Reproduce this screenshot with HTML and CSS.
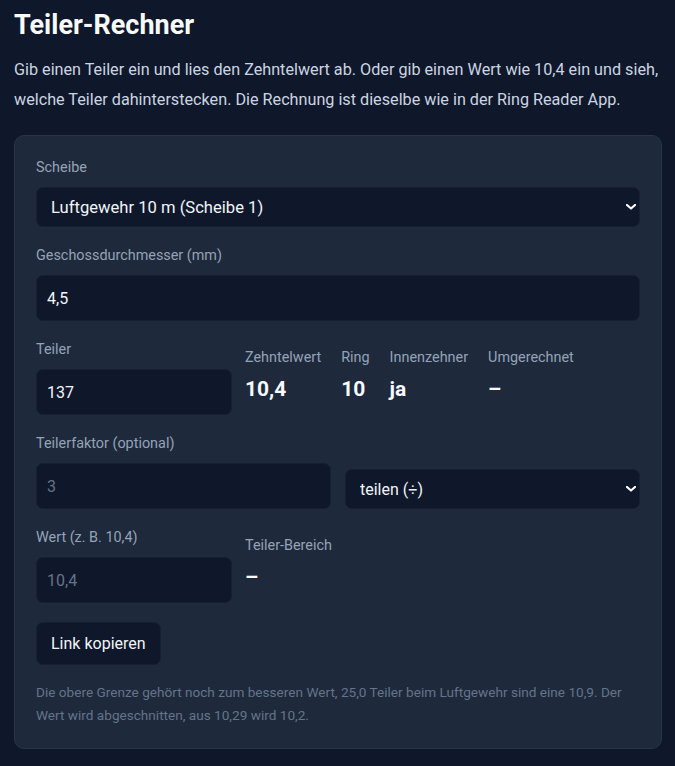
FILE: index.html
```html
<!DOCTYPE html>
<html lang="de">
<head>
<meta charset="utf-8">
<title>Teiler-Rechner</title>
<link rel="stylesheet" href="styles.css">
</head>
<body>
<main class="page">
  <h1 class="title">Teiler-Rechner</h1>
  <p class="intro">Gib einen Teiler ein und lies den Zehntelwert ab. Oder gib einen Wert wie 10,4 ein und sieh, welche Teiler dahinterstecken. Die Rechnung ist dieselbe wie in der Ring Reader App.</p>

  <section class="card">
    <div class="field">
      <label class="label" for="scheibe">Scheibe</label>
      <div class="select-wrap">
        <select id="scheibe" class="select select-wide">
          <option>Luftgewehr 10 m (Scheibe 1)</option>
        </select>
        <svg class="chevron" viewBox="0 0 10 6" width="10" height="6"><path d="M1 1l4 3.5L9 1" fill="none" stroke="#ffffff" stroke-width="2.2" stroke-linecap="round" stroke-linejoin="round"/></svg>
      </div>
    </div>

    <div class="field">
      <label class="label" for="kal">Geschossdurchmesser (mm)</label>
      <input id="kal" class="input" type="text" value="4,5">
    </div>

    <div class="row row-split">
      <div class="field-inner">
        <label class="label" for="teiler">Teiler</label>
        <input id="teiler" class="input" type="text" value="137">
      </div>
      <div class="results">
        <div class="result">
          <span class="result-label">Zehntelwert</span>
          <span class="result-value">10,4</span>
        </div>
        <div class="result">
          <span class="result-label">Ring</span>
          <span class="result-value">10</span>
        </div>
        <div class="result">
          <span class="result-label">Innenzehner</span>
          <span class="result-value">ja</span>
        </div>
        <div class="result">
          <span class="result-label">Umgerechnet</span>
          <span class="result-value">–</span>
        </div>
      </div>
    </div>

    <div class="row row-half">
      <div class="field-inner">
        <label class="label" for="faktor">Teilerfaktor (optional)</label>
        <input id="faktor" class="input" type="text" placeholder="3">
      </div>
      <div class="select-wrap">
        <select class="select">
          <option>teilen (÷)</option>
        </select>
        <svg class="chevron" viewBox="0 0 10 6" width="10" height="6"><path d="M1 1l4 3.5L9 1" fill="none" stroke="#ffffff" stroke-width="2.2" stroke-linecap="round" stroke-linejoin="round"/></svg>
      </div>
    </div>

    <div class="row row-split">
      <div class="field-inner">
        <label class="label" for="wert">Wert (z. B. 10,4)</label>
        <input id="wert" class="input" type="text" placeholder="10,4">
      </div>
      <div class="results">
        <div class="result">
          <span class="result-label">Teiler-Bereich</span>
          <span class="result-value">–</span>
        </div>
      </div>
    </div>

    <button class="button" type="button">Link kopieren</button>

    <p class="note">Die obere Grenze gehört noch zum besseren Wert, 25,0 Teiler beim Luftgewehr sind eine 10,9. Der Wert wird abgeschnitten, aus 10,29 wird 10,2.</p>
  </section>
</main>
</body>
</html>
```

FILE: styles.css
```css
* { box-sizing: border-box; }

html, body {
  margin: 0;
  padding: 0;
  background: #0f172a;
}

body {
  font-family: Roboto, "Liberation Sans", Arial, sans-serif;
  color: #e2e8f0;
}

.page {
  padding: 0 13px 0 14px;
}

.title {
  margin: 9px 0 0;
  font-size: 27px;
  line-height: 33px;
  font-weight: 700;
  color: #f8fafc;
}

.intro {
  margin: 13px 0 20px;
  font-size: 16.2px;
  line-height: 30px;
  color: #cbd5e1;
}

.card {
  background: #1e293b;
  border: 1px solid #273449;
  border-radius: 10px;
  padding: 20px 21px 21px;
}

.field {
  margin-bottom: 17px;
}

.label {
  display: block;
  font-size: 14.4px;
  line-height: 20px;
  padding-top: 2px;
  color: #94a3b8;
  margin-bottom: 9px;
}

.input,
.select {
  display: block;
  width: 100%;
  font-family: inherit;
  font-size: 16px;
  color: #f1f5f9;
  background: #0f172a;
  border: 1px solid #172033;
  border-radius: 7px;
  outline: none;
}

.input {
  height: 46px;
  padding: 0 10px;
}

.input::placeholder {
  color: #64748b;
  opacity: 1;
}

.select-wrap {
  position: relative;
}

.select {
  height: 40px;
  padding: 0 30px 0 14px;
  appearance: none;
  -webkit-appearance: none;
}

.select-wide {
  font-size: 16.6px;
}

.chevron {
  position: absolute;
  right: 4px;
  top: 17px;
  pointer-events: none;
}

.row {
  display: grid;
  margin-bottom: 17px;
}

.row-split {
  grid-template-columns: 196px 1fr;
  column-gap: 13px;
  align-items: start;
}

.row-half {
  grid-template-columns: 1fr 1fr;
  column-gap: 14px;
  align-items: end;
}

.results {
  display: flex;
  gap: 20px;
  padding-top: 10px;
}

.result {
  display: flex;
  flex-direction: column;
}

.result-label {
  font-size: 14.4px;
  line-height: 20px;
  color: #94a3b8;
}

.result-value {
  margin-top: 7px;
  font-size: 21px;
  line-height: 28px;
  font-weight: 700;
  color: #f8fafc;
}

.button {
  display: block;
  height: 43px;
  padding: 0 14px;
  margin-top: 19px;
  font-family: inherit;
  font-size: 16px;
  font-weight: 400;
  color: #f1f5f9;
  background: #0f172a;
  border: 1px solid #172033;
  border-radius: 7px;
}

.note {
  margin: 16px 0 0;
  font-size: 13.6px;
  line-height: 23px;
  color: #64748b;
}
```
